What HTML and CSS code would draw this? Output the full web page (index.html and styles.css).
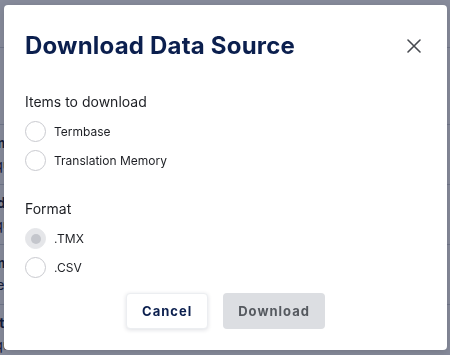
FILE: index.html
```html
<!DOCTYPE html>
<html lang="en">
<head>
<meta charset="utf-8">
<title>Download Data Source</title>
<link rel="stylesheet" href="styles.css">
</head>
<body>
<div class="page">
  <div class="page-head"></div>
  <div class="rows">
    <div class="row"><div class="cell"><b>terminologie</b><span>risque</span></div><div class="cell"><b>Mots clés</b><span>sans</span></div></div>
    <div class="row"><div class="cell"><b>traduction</b><span>risque</span></div><div class="cell"><b>Mots clés</b><span>sans</span></div></div>
    <div class="row"><div class="cell"><b>terme</b><span>rare</span></div><div class="cell"><b>Mots clés</b><span>sans</span></div></div>
    <div class="row"><div class="cell"><b>texte</b><span>risque</span></div><div class="cell"><b>Mots clés</b><span>sans</span></div></div>
    <div class="row row-last"><div class="cell"><b>terme</b><span>Sans danger</span></div><div class="cell"><b>Mots clés</b><span>physiques extrêmes, même s'il n'y a pas</span></div></div>
  </div>
</div>

<div class="overlay">
  <div class="modal" role="dialog" aria-labelledby="dlg-title">
    <header class="modal-head">
      <h2 class="title" id="dlg-title">Download Data Source</h2>
      <button class="close" aria-label="Close">
        <svg width="14" height="14" viewBox="0 0 14 14"><path d="M1 1L13 13M13 1L1 13" stroke="#474a50" stroke-width="1.6" stroke-linecap="round"/></svg>
      </button>
    </header>
    <div class="modal-body">
      <div class="group">
        <div class="group-label">Items to download</div>
        <label class="radio"><span class="circle"></span><span class="radio-text">Termbase</span></label>
        <label class="radio"><span class="circle"></span><span class="radio-text">Translation Memory</span></label>
      </div>
      <div class="group">
        <div class="group-label">Format</div>
        <label class="radio is-disabled"><span class="circle checked"></span><span class="radio-text">.TMX</span></label>
        <label class="radio"><span class="circle"></span><span class="radio-text">.CSV</span></label>
      </div>
    </div>
    <footer class="modal-foot">
      <button class="btn btn-secondary">Cancel</button>
      <button class="btn btn-disabled" disabled>Download</button>
    </footer>
  </div>
</div>
</body>
</html>
```

FILE: styles.css
```css
* { box-sizing: border-box; }
html, body { margin: 0; padding: 0; overflow: hidden; }
body {
  width: 450px;
  height: 355px;
  background: #fff;
  font-family: "Inter", "Noto Sans", sans-serif;
  color: #1d1f24;
}

/* background page */
.page { margin-left: -22px; height: 355px; overflow: hidden; }
.page-head { height: 48px; border-bottom: 1px solid #d4d7de; }
.rows { padding-top: 76px; }
.row {
  display: grid;
  grid-template-columns: 219px 1fr;
  height: 60px;
  border-top: 1px solid #d4d7de;
  padding-top: 9px;
}
.row-last .cell span { margin-top: 10px; }
.cell { display: flex; flex-direction: column; gap: 4px; font-size: 14px; line-height: 18px; color: #1b2540; white-space: nowrap; }
.cell b { font-weight: 700; }

/* overlay + modal */
.overlay {
  position: fixed;
  inset: 0;
  background: rgba(16, 24, 56, 0.5);
  display: flex;
  align-items: flex-start;
  padding: 5px 0 0 4px;
}
.modal {
  width: 443px;
  background: #fff;
  border-radius: 4px;
  padding: 27px 21px 21px 21px;
  box-shadow: 0 2px 8px rgba(0,0,0,0.15);
}
.modal-head {
  display: flex;
  align-items: center;
  justify-content: space-between;
}
.title {
  margin: 0;
  font-size: 24px;
  line-height: 28px;
  font-weight: 700;
  color: #0b1f4e;
  letter-spacing: 0.2px;
}
.close {
  width: 24px;
  height: 24px;
  padding: 0;
  border: 0;
  background: none;
  display: flex;
  align-items: center;
  justify-content: center;
}

.modal-body { margin-top: 32px; }
.group + .group { margin-top: 24px; }
.group-label {
  font-size: 14px;
  line-height: 20px;
  color: #1d1f24;
  margin-bottom: 5px;
}
.radio {
  display: flex;
  align-items: center;
  gap: 8px;
  height: 29px;
}
.circle {
  width: 21px;
  height: 21px;
  border-radius: 50%;
  border: 1px solid #c9cacf;
  background: #fff;
  display: flex;
  align-items: center;
  justify-content: center;
  flex: none;
}
.circle.checked { background: #e5e6e9; border-color: #e5e6e9; }
.circle.checked::after {
  content: "";
  width: 10px;
  height: 10px;
  border-radius: 50%;
  background: #c4c6cc;
}
.radio-text { font-size: 12px; color: #1d1f24; }

.modal-foot {
  display: flex;
  justify-content: center;
  gap: 15px;
  margin-top: 11px;
}
.btn {
  height: 36px;
  padding: 0 15px;
  border-radius: 4px;
  font-family: inherit;
  font-size: 13px;
  font-weight: 700;
  letter-spacing: 1px;
}
.btn-secondary {
  background: #fff;
  color: #0b1f4e;
  border: 1px solid #eceef1;
  box-shadow: 0 1px 4px rgba(20, 30, 60, 0.14);
}
.btn-disabled {
  background: #dcdee2;
  color: #55595f;
  border: 0;
}
```
